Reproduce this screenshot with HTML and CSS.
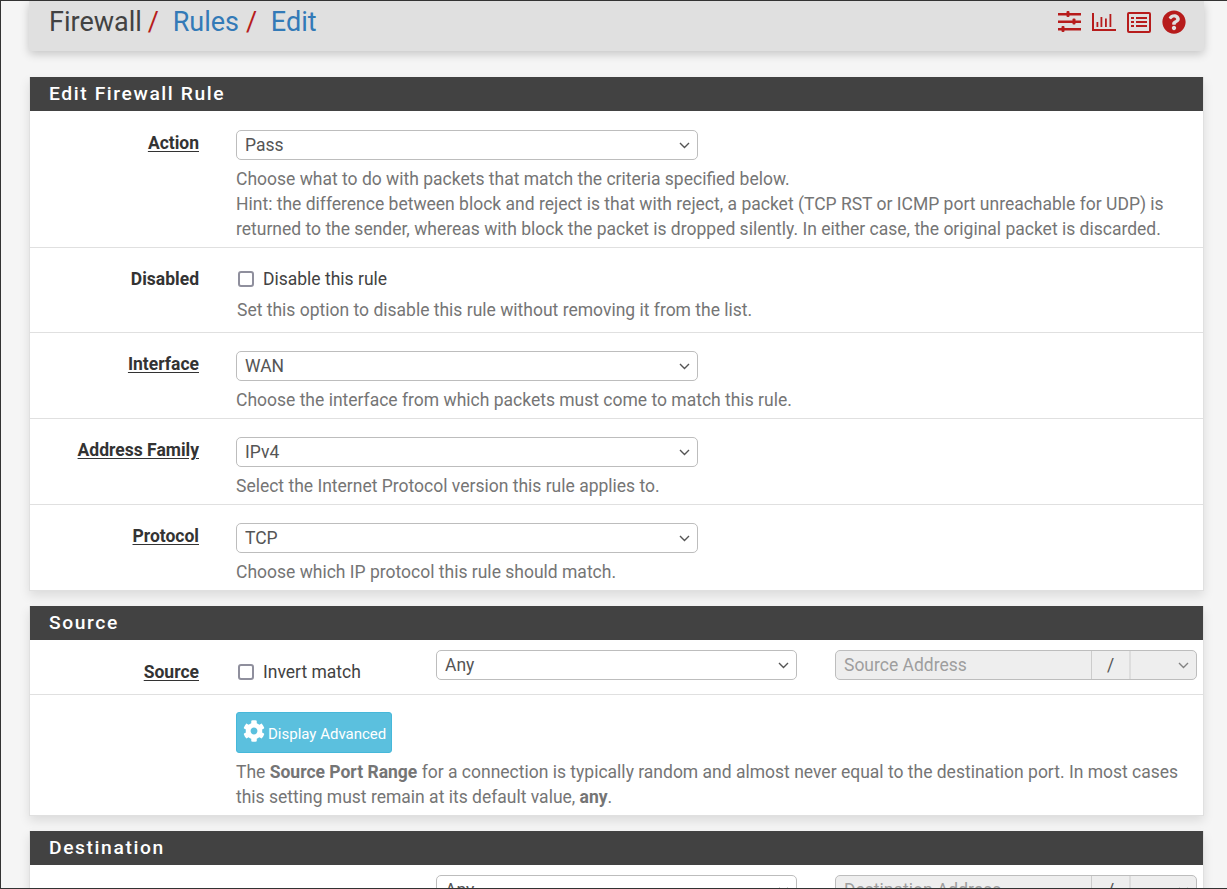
FILE: index.html
```html
<!DOCTYPE html>
<html>
<head>
    <meta charset='utf-8'>
    <title>Firewall: Rules: Edit</title>
    <link rel="stylesheet" href="styles.css">
</head>
<body>
<div class="frame">
    <div class="breadcrumb">
        <h1>
            <span>Firewall</span><i>/</i>
            <a href="#">Rules</a><i>/</i>
            <a href="#">Edit</a>
        </h1>
        <div class="tools">
            <svg width="24" height="22" viewBox="0 0 24 22" fill="#b71c1c">
                <rect x="1" y="2" width="23" height="2.5"/><rect x="9.5" y="0" width="3" height="6" rx="1"/>
                <rect x="1" y="9.5" width="23" height="2.5"/><rect x="15.5" y="7.5" width="3" height="6" rx="1"/>
                <rect x="1" y="17" width="23" height="2.5"/><rect x="4.5" y="15" width="3" height="6" rx="1"/>
            </svg>
            <svg width="24" height="18" viewBox="0 0 24 18" fill="#b71c1c">
                <rect x="0" y="0" width="2" height="18"/><rect x="0" y="16" width="24" height="2"/>
                <rect x="4.5" y="9" width="1.8" height="5"/><rect x="8.5" y="4" width="1.8" height="10"/>
                <rect x="13" y="5.5" width="1.8" height="8.5"/><rect x="17.5" y="1" width="1.8" height="13"/>
            </svg>
            <svg width="24" height="21" viewBox="0 0 24 21" fill="#b71c1c">
                <path fill-rule="evenodd" d="M2 0h20a2 2 0 0 1 2 2v17a2 2 0 0 1-2 2H2a2 2 0 0 1-2-2V2a2 2 0 0 1 2-2zm0 2v17h20V2z"/>
                <rect x="4" y="5" width="3" height="2"/><rect x="9" y="5" width="11" height="2"/>
                <rect x="4" y="9" width="3" height="2"/><rect x="9" y="9" width="11" height="2"/>
                <rect x="4" y="13" width="3" height="2"/><rect x="9" y="13" width="11" height="2"/>
            </svg>
            <svg width="24" height="24" viewBox="0 0 512 512" fill="#b71c1c">
                <path d="M504 256c0 136.997-111.043 248-248 248S8 392.997 8 256C8 119.083 119.043 8 256 8s248 111.083 248 248zM262.655 90c-54.497 0-89.255 22.957-116.549 63.758-3.536 5.286-2.353 12.415 2.715 16.258l34.699 26.31c5.205 3.947 12.621 3.008 16.665-2.122 17.864-22.658 30.113-35.797 57.303-35.797 20.429 0 45.698 13.148 45.698 32.958 0 14.976-12.363 22.667-32.534 33.976C247.128 238.528 216 254.941 216 296v4c0 6.627 5.373 12 12 12h56c6.627 0 12-5.373 12-12v-1.333c0-28.462 83.186-29.647 83.186-106.667 0-58.002-60.165-102-116.531-102zM256 338c-25.365 0-46 20.635-46 46 0 25.364 20.635 46 46 46s46-20.636 46-46c0-25.365-20.635-46-46-46z"/>
            </svg>
        </div>
    </div>

    <div class="panel">
        <h2>Edit Firewall Rule</h2>
        <div class="row row-action">
            <label class="name"><u>Action</u></label>
            <div class="field">
                <select class="wide"><option>Pass</option></select>
                <p class="help">Choose what to do with packets that match the criteria specified below.<br>
                Hint: the difference between block and reject is that with reject, a packet (TCP RST or ICMP port unreachable for UDP) is returned to the sender, whereas with block the packet is dropped silently. In either case, the original packet is discarded.</p>
            </div>
        </div>
        <div class="row row-check">
            <label class="name">Disabled</label>
            <div class="field">
                <label class="check"><input type="checkbox"> Disable this rule</label>
                <p class="help help-check">Set this option to disable this rule without removing it from the list.</p>
            </div>
        </div>
        <div class="row">
            <label class="name"><u>Interface</u></label>
            <div class="field">
                <select class="wide"><option>WAN</option></select>
                <p class="help">Choose the interface from which packets must come to match this rule.</p>
            </div>
        </div>
        <div class="row">
            <label class="name"><u>Address Family</u></label>
            <div class="field">
                <select class="wide"><option>IPv4</option></select>
                <p class="help">Select the Internet Protocol version this rule applies to.</p>
            </div>
        </div>
        <div class="row last">
            <label class="name"><u>Protocol</u></label>
            <div class="field">
                <select class="wide"><option>TCP</option></select>
                <p class="help">Choose which IP protocol this rule should match.</p>
            </div>
        </div>
    </div>

    <div class="panel">
        <h2>Source</h2>
        <div class="row row-addr">
            <label class="name"><u>Source</u></label>
            <div class="addr">
                <label class="check"><input type="checkbox"> Invert match</label>
                <select class="any"><option>Any</option></select>
                <div class="group">
                    <input type="text" placeholder="Source Address" disabled>
                    <span>/</span>
                    <select disabled></select>
                </div>
            </div>
        </div>
        <div class="row row-adv last">
            <div class="name"></div>
            <div class="field">
                <button type="button" class="btn-info">
                    <svg width="22" height="22" viewBox="0 0 512 512" fill="#fff"><path d="M487.4 315.7l-42.6-24.6c4.3-23.2 4.3-47 0-70.2l42.6-24.6c4.9-2.8 7.1-8.6 5.5-14-11.1-35.6-30-67.8-54.7-94.6-3.8-4.1-10-5.1-14.8-2.3L380.8 110c-17.9-15.4-38.5-27.3-60.8-35.1V25.8c0-5.6-3.9-10.5-9.4-11.7-36.7-8.2-74.3-7.8-109.2 0-5.5 1.2-9.4 6.1-9.4 11.7V75c-22.2 7.9-42.8 19.8-60.8 35.1L88.7 85.5c-4.9-2.8-11-1.9-14.8 2.3-24.7 26.7-43.6 58.9-54.7 94.6-1.7 5.4.6 11.2 5.5 14L67.3 221c-4.3 23.2-4.3 47 0 70.2l-42.6 24.6c-4.9 2.8-7.1 8.6-5.5 14 11.1 35.6 30 67.8 54.7 94.6 3.8 4.1 10 5.1 14.8 2.3l42.6-24.6c17.9 15.4 38.5 27.3 60.8 35.1v49.2c0 5.6 3.9 10.5 9.4 11.7 36.7 8.2 74.3 7.8 109.2 0 5.5-1.2 9.4-6.1 9.4-11.7v-49.2c22.2-7.9 42.8-19.8 60.8-35.1l42.6 24.6c4.9 2.8 11 1.9 14.8-2.3 24.7-26.7 43.6-58.9 54.7-94.6 1.5-5.5-.7-11.3-5.6-14.1zM256 336c-44.1 0-80-35.9-80-80s35.9-80 80-80 80 35.9 80 80-35.9 80-80 80z"/></svg>
                    <span>Display Advanced</span>
                </button>
                <p class="help">The <b>Source Port Range</b> for a connection is typically random and almost never equal to the destination port. In most cases this setting must remain at its default value, <b>any</b>.</p>
            </div>
        </div>
    </div>

    <div class="panel">
        <h2>Destination</h2>
        <div class="row row-addr">
            <label class="name"><u>Destination</u></label>
            <div class="addr">
                <label class="check"><input type="checkbox"> Invert match</label>
                <select class="any"><option>Any</option></select>
                <div class="group">
                    <input type="text" placeholder="Destination Address" disabled>
                    <span>/</span>
                    <select disabled></select>
                </div>
            </div>
        </div>
    </div>
</div>
</body>
</html>
```

FILE: styles.css
```css
html,body{
    padding: 0;
    margin: 0;
}
body{
    background: #f5f5f5;
    font-family: Roboto, "Liberation Sans", sans-serif;
    font-size: 17.5px;
    color: #212121;
}
.frame{
    box-sizing: border-box;
    height: 889px;
    overflow: hidden;
    border-top: 1px solid #333;
    border-left: 1px solid #333;
    border-bottom: 1px solid #333;
    padding: 0 23px 0 28px;
}
.breadcrumb{
    display: flex;
    justify-content: space-between;
    align-items: flex-start;
    height: 50px;
    padding: 0 18px 0 20px;
    margin-bottom: 26px;
    background: #e0e0e0;
    border-radius: 0 0 3px 3px;
    box-shadow: 0 3px 10px rgba(0,0,0,.2);
}
.breadcrumb h1{
    margin: 0;
    font-size: 27px;
    font-weight: 400;
    line-height: 42px;
    color: #424242;
}
.breadcrumb i{
    font-style: normal;
    color: #b71c1c;
    margin: 0 7px 0 6px;
}
.breadcrumb a{
    color: #337ab7;
    text-decoration: none;
}
.breadcrumb a + i{
    margin-left: 7px;
}
.tools{
    display: flex;
    align-items: center;
    gap: 11px;
    height: 42px;
}
.panel{
    background: #fff;
    border: 1px solid #e0e0e0;
    border-top: 0;
    margin-bottom: 15px;
    box-shadow: 0 5px 10px rgba(0,0,0,.1);
}
.panel h2{
    margin: 0;
    padding: 0 19px;
    height: 34px;
    line-height: 34px;
    background: #424242;
    color: #fff;
    font-size: 19.25px;
    font-weight: 500;
    letter-spacing: 1.6px;
}
.row{
    display: flex;
    height: 86px;
    box-sizing: border-box;
    border-bottom: 1px solid #e0e0e0;
    padding-top: 18px;
}
.row.last{
    height: 85px;
    border-bottom: 0;
}
.row-action{
    height: 137px;
    padding-top: 19px;
}
.row-check{
    height: 85px;
}
.row-addr{
    height: 55px;
    padding-top: 10px;
}
.row-adv.last{
    height: 120px;
    padding-top: 17px;
}
.name{
    flex: none;
    width: 169px;
    text-align: right;
    font-weight: 700;
    color: #333;
    line-height: 26px;
    margin-right: 37px;
}
.row-addr .name{
    margin-top: 9px;
}
.name u{
    text-underline-offset: 2px;
}
.field{
    flex: 1;
    padding-right: 20px;
}
select{
    appearance: none;
    box-sizing: border-box;
    height: 30px;
    border: 1px solid #bdbdbd;
    border-radius: 5px;
    background: #fff url("data:image/svg+xml,%3Csvg xmlns='http://www.w3.org/2000/svg' width='11' height='7'%3E%3Cpath d='M1 1l4.5 4.5L10 1' fill='none' stroke='%23555' stroke-width='1.4'/%3E%3C/svg%3E") no-repeat right 7px center;
    font-family: inherit;
    font-size: 17.5px;
    color: #555;
    padding: 0 8px;
}
select.wide{
    display: block;
    width: 462px;
}
.help{
    margin: 7px 0 0;
    line-height: 25px;
    color: #757575;
}
.help-check{
    margin: 6px 0 0 1px;
}
.check{
    display: flex;
    align-items: center;
    gap: 9px;
    height: 26px;
    padding-left: 2px;
    font-size: 17.5px;
    color: #424242;
}
.check input{
    appearance: none;
    box-sizing: border-box;
    width: 16px;
    height: 16px;
    margin: 0;
    background: #fff;
    border: 2px solid #8f8f9d;
    border-radius: 3px;
}
.addr{
    flex: 1;
    display: flex;
    align-items: flex-start;
    padding-right: 6px;
}
.addr .check{
    width: 198px;
    flex: none;
    box-sizing: border-box;
    margin-top: 9px;
}
.addr .any{
    width: 361px;
    margin: 0 38px 0 2px;
}
.group{
    flex: 1;
    display: flex;
    height: 30px;
    box-sizing: border-box;
    border: 1px solid #bdbdbd;
    border-radius: 5px;
    background: #eee;
    overflow: hidden;
}
.group input{
    flex: 1;
    min-width: 0;
    border: 0;
    padding: 0 8px;
    background: transparent;
    font-family: inherit;
    font-size: 17.5px;
}
.group input::placeholder{
    color: #9e9e9e;
}
.group span{
    width: 37px;
    text-align: center;
    line-height: 28px;
    font-size: 17.5px;
    color: #555;
    border-left: 1px solid #ccc;
    border-right: 2px solid #ddd;
}
.group select{
    width: 65px;
    height: 28px;
    border: 0;
    border-radius: 0;
    background-color: transparent;
}
.btn-info{
    display: flex;
    align-items: center;
    gap: 3px;
    box-sizing: border-box;
    width: 156px;
    height: 41px;
    padding: 0 0 0 6px;
    border: 1px solid #46b8da;
    border-radius: 3px;
    background: #5bc0de;
    color: #fff;
    font-family: inherit;
    font-size: 15px;
    white-space: nowrap;
}
.btn-info svg{
    margin-top: -4px;
}
.btn-info span{
    margin-top: 3px;
}
```
